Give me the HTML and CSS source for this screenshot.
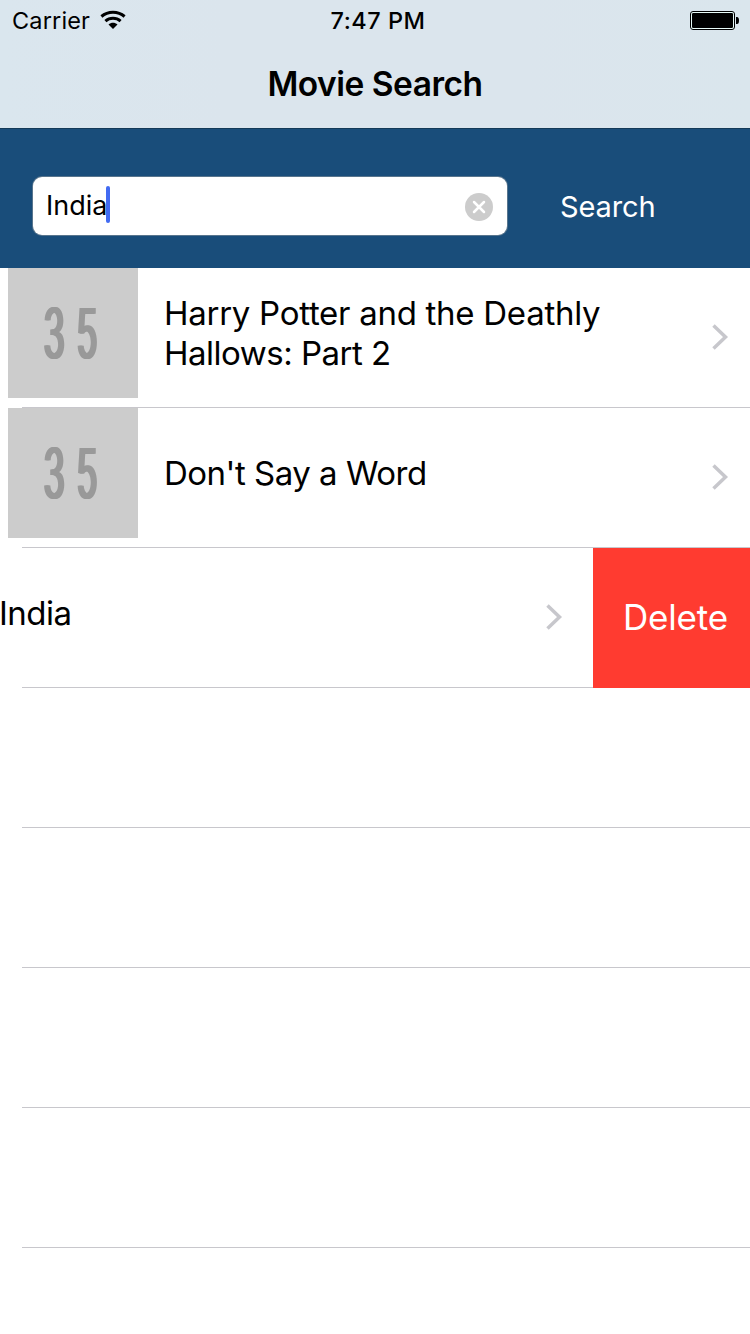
FILE: index.html
```html
<!DOCTYPE html>
<html lang="en">
<head>
<meta charset="utf-8">
<title>Movie Search</title>
<link rel="stylesheet" href="styles.css">
</head>
<body>
<header class="navbar">
  <div class="status">
    <div class="carrier"><span class="carrier-name">Carrier</span>
      <svg class="wifi" width="26" height="20" viewBox="0 0 26 20" fill="none" stroke="#000">
        <path d="M1.400 6.500C8 .8 18 .8 24.600 6.500" stroke-width="3"/>
        <path d="M5.400 11.200C9.800 7.400 16.200 7.400 20.600 11.200" stroke-width="3"/>
        <path d="M8.500 14.500C11.200 12.200 14.800 12.200 17.500 14.500L13 19z" fill="#000" stroke="none"/>
      </svg>
    </div>
    <span class="time">7:47 PM</span>
    <svg class="battery" width="50" height="20" viewBox="0 0 50 20">
      <rect x=".5" y=".5" width="44" height="18" rx="2.5" fill="#e8fbf8" stroke="#000"/>
      <rect x="2" y="2" width="41" height="15" rx="1.2"/>
      <path d="M46 6h1q2 0 2 3.500t-2 3.500h-1z"/>
    </svg>
  </div>
  <h1 class="title">Movie Search</h1>
</header>
<section class="searchbar">
  <div class="field">
    <span class="query">India</span><i class="caret"></i>
    <svg class="clear" width="28" height="28" viewBox="0 0 28 28"><circle cx="14" cy="14" r="14" fill="#ccc"/><path d="M9 9l10 10M19 9L9 19" stroke="#fff" stroke-width="2.500" stroke-linecap="round"/></svg>
  </div>
  <span class="search-button">Search</span>
</section>
<main class="list">
  <div class="row">
    <svg class="thumb" width="130" height="130" viewBox="0 0 130 130"><rect width="130" height="130" fill="#ccc"/><g class="digits"><text transform="translate(36 90.300) scale(.5 1)">3</text><text transform="translate(69 90.300) scale(.5 1)">5</text></g></svg>
    <div class="name"><span class="line line-a">Harry Potter and the Deathly</span><span class="line">Hallows: Part 2</span></div>
    <svg class="chevron" width="18" height="28" viewBox="0 0 18 28"><path d="M2.500 2.500L14.500 14 2.500 25.500"/></svg>
  </div>
  <div class="row">
    <svg class="thumb" width="130" height="130" viewBox="0 0 130 130"><rect width="130" height="130" fill="#ccc"/><g class="digits"><text transform="translate(36 90.300) scale(.5 1)">3</text><text transform="translate(69 90.300) scale(.5 1)">5</text></g></svg>
    <div class="name"><span class="line">Don't Say a Word</span></div>
    <svg class="chevron" width="18" height="28" viewBox="0 0 18 28"><path d="M2.500 2.500L14.500 14 2.500 25.500"/></svg>
  </div>
  <div class="row swiped">
    <div class="name"><span class="line">India</span></div>
    <svg class="chevron" width="18" height="28" viewBox="0 0 18 28"><path d="M2.500 2.500L14.500 14 2.500 25.500"/></svg>
    <div class="delete"><span>Delete</span></div>
  </div>
  <div class="row"></div>
  <div class="row"></div>
  <div class="row"></div>
  <div class="row"></div>
</main>
</body>
</html>
```
FILE: styles.css
```css
* { box-sizing: border-box; }
body { margin: 0; width: 750px; height: 1334px; overflow: hidden; background: #fff; color: #000; font-family: Inter, "Liberation Sans", sans-serif; }
svg { display: block; flex: none; }
span { white-space: nowrap; }
.navbar { height: 129px; background: linear-gradient(90deg, #dae6ee, #dbe5ed 30%, #dbe5ed 70%, #dae6ed); border-bottom: 1px solid #143a58; }
.status { height: 40px; display: grid; grid-template-columns: 250px 1fr 250px; grid-template-rows: 40px; align-items: center; }
.carrier { display: flex; align-items: center; gap: 11px; padding-left: 12px; font-size: 23.500px; letter-spacing: .15px; }
.carrier-name { width: 77px; line-height: 38px; padding-top: 2px; }
.wifi { margin-top: 0; }
.time { padding: 2px 0 0 6px; text-align: center; font-size: 23.500px; font-weight: 500; letter-spacing: .5px; line-height: 38px; }
.battery { justify-self: end; margin-right: 10px; margin-top: 2px; }
.title { margin: 0; text-align: center; font-size: 33.500px; line-height: 88px; font-weight: 600; letter-spacing: -.5px; }
.searchbar { height: 139px; background: #194d7a; display: flex; padding: 48px 0 0 33px; }
.field { width: 474px; height: 58px; border-radius: 9px; background: #fff; box-shadow: 0 0 0 1px #58758d; display: flex; align-items: center; padding: 0 14px 0 13px; }
.query { font-size: 27px; width: 61px; line-height: 58px; height: 58px; }
.caret { width: 4px; height: 37px; margin: -3px 0 0 -1px; border-radius: 2px; background: #426bf2; }
.clear { margin-left: auto; margin-top: 2px; }
.search-button { margin-left: 53px; color: #fff; font-size: 29px; line-height: 60px; letter-spacing: -.1px; }
.row { height: 140px; display: flex; padding-left: 8px; background: linear-gradient(#c8c7cc, #c8c7cc) 22px 139px / 728px 1px no-repeat; }
.digits { font-size: 69px; font-weight: 400; fill: #999; filter: drop-shadow(1.500px 0 0 #999) drop-shadow(-1.500px 0 0 #999); }
.name { width: 541px; margin-left: 26px; height: 130px; display: flex; flex-direction: column; justify-content: center; }
.line { font-size: 33px; line-height: 40px; letter-spacing: -.5px; }
.line-a { letter-spacing: -.28px; }
.chevron { margin: 55px 0 0 6px; fill: none; stroke: #c7c7cc; stroke-width: 3.500; }
.swiped { padding-left: 0; }
.swiped .name { width: 542px; margin-left: -1px; }
.swiped .chevron { margin-left: 4px; }
.delete { width: 157px; height: 140px; margin-left: auto; background: #ff3b30; color: #fff; font-size: 35px; line-height: 138px; padding-left: 30px; letter-spacing: -.2px; }
```
